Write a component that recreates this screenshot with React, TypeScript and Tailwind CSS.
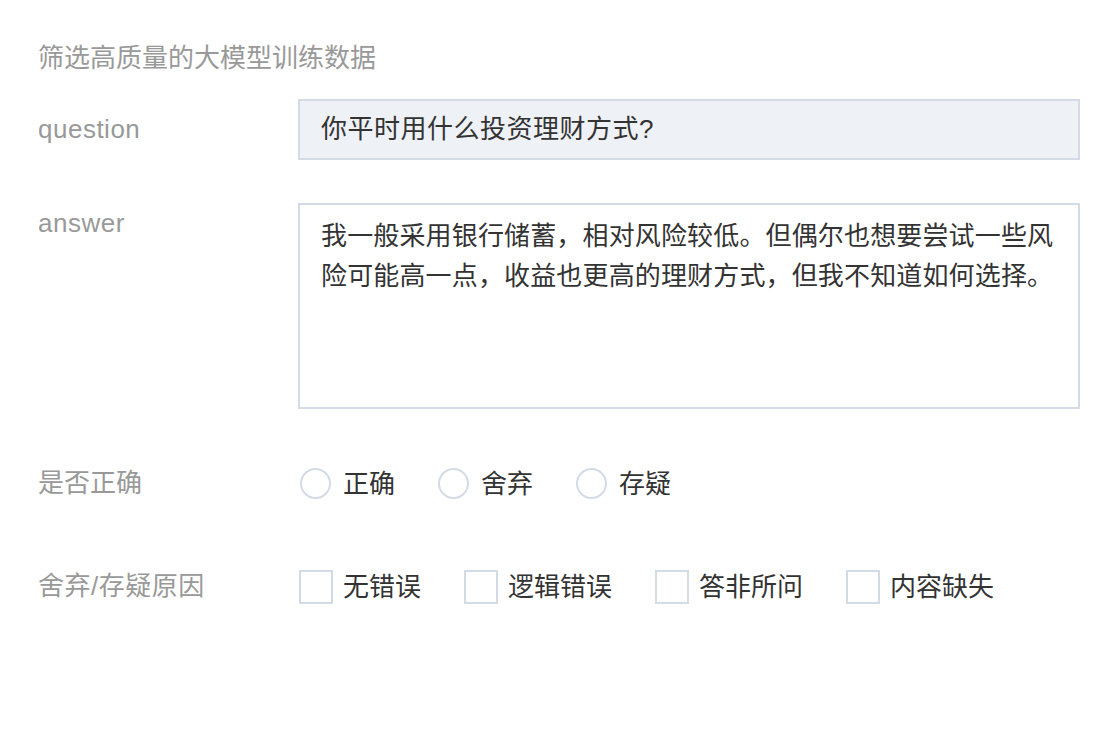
import React from 'react';

const font = { fontFamily: '"Liberation Sans", "Noto Sans CJK SC", sans-serif' };

function Radio({ label }: { label: string }) {
  return (
    <label className="flex items-center gap-3">
      <span className="h-[31px] w-[31px] rounded-full border-2 border-[#d3dce6] bg-white" />
      <span className="text-[26px] leading-[32px] text-[#333]">{label}</span>
    </label>
  );
}

function Checkbox({ label }: { label: string }) {
  return (
    <label className="flex items-center gap-[10px]">
      <span className="h-[34px] w-[34px] border-2 border-[#d3dce6] bg-white" />
      <span className="text-[26px] leading-[34px] text-[#333]">{label}</span>
    </label>
  );
}

export default function App() {
  return (
    <div className="min-h-screen bg-white pl-[38px] pr-[38px] pt-[40px]" style={font}>
      <h1 className="text-[26px] leading-[36px] font-normal text-[#999]">筛选高质量的大模型训练数据</h1>

      <div className="mt-[23px] flex items-center">
        <div className="w-[260px] text-[26px] tracking-[0.5px] text-[#999]">question</div>
        <div className="flex h-[61px] w-[782px] items-center border-2 border-[#d3dce6] bg-[#eef1f6] pl-[21px] text-[26px] tracking-[0.5px] text-[#333]">
          你平时用什么投资理财方式?
        </div>
      </div>

      <div className="mt-[43px] flex items-start">
        <div className="w-[260px] pt-[2px] text-[26px] leading-[36px] tracking-[0.5px] text-[#999]">answer</div>
        <div className="h-[206px] w-[782px] border-2 border-[#d3dce6] bg-white pl-[21px] pr-[12px] pt-[11px] text-[26px] leading-[40px] tracking-[0.15px] text-[#333]">
          我一般采用银行储蓄，相对风险较低。但偶尔也想要尝试一些风险可能高一点，收益也更高的理财方式，但我不知道如何选择。
        </div>
      </div>

      <div className="mt-[55px] flex items-center">
        <div className="w-[262px] text-[26px] text-[#999]">是否正确</div>
        <div className="flex items-center gap-[43px]">
          <Radio label="正确" />
          <Radio label="舍弃" />
          <Radio label="存疑" />
        </div>
      </div>

      <div className="mt-[64px] flex items-center">
        <div className="w-[261px] text-[26px] tracking-[0.5px] text-[#999]">舍弃/存疑原因</div>
        <div className="flex items-center gap-[43px]">
          <Checkbox label="无错误" />
          <Checkbox label="逻辑错误" />
          <Checkbox label="答非所问" />
          <Checkbox label="内容缺失" />
        </div>
      </div>
    </div>
  );
}
